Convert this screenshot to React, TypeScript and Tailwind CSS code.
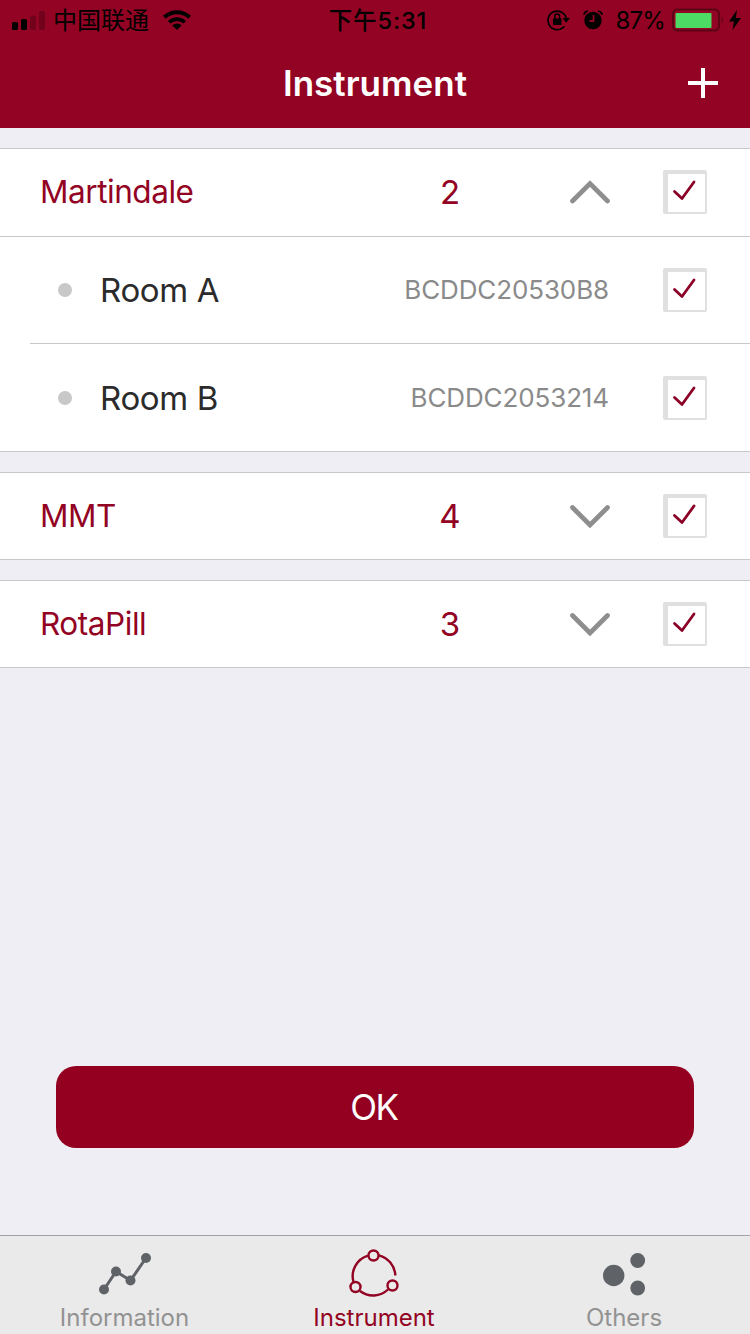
import { useState } from "react";

interface Room {
  name: string;
  serial: string;
}

interface InstrumentGroup {
  name: string;
  count: number;
  rooms: Room[];
}

const groups: InstrumentGroup[] = [
  {
    name: "Martindale",
    count: 2,
    rooms: [
      { name: "Room A", serial: "BCDDC20530B8" },
      { name: "Room B", serial: "BCDDC2053214" },
    ],
  },
  { name: "MMT", count: 4, rooms: [] },
  { name: "RotaPill", count: 3, rooms: [] },
];

function StatusBar() {
  return (
    <div className="grid h-10 grid-cols-3 items-center text-black">
      <div className="flex items-center pl-3">
        <svg className="mt-[2px]" width="34" height="20" viewBox="0 0 34 20">
          <rect x="0" y="11" width="6" height="8" rx="1.5" />
          <rect x="9" y="8" width="6" height="11" rx="1.5" />
          <rect x="18" y="4.5" width="6" height="14.5" rx="1.5" opacity=".22" />
          <rect x="27" y="0" width="6" height="19" rx="1.5" opacity=".22" />
        </svg>
        <span className="ml-[7px] pt-[2px] text-[24px] leading-[38px] whitespace-nowrap">中国联通</span>
        <svg className="ml-[14px]" width="28" height="20" viewBox="0 0 28 20">
          <g fill="none" stroke="currentColor" strokeWidth="4">
            <path d="M1.4 7.3a18 18 0 0 1 25.2 0" />
            <path d="M6.2 12.3a11.2 11.2 0 0 1 15.6 0" strokeWidth="3.6" />
          </g>
          <path d="M9.2 15.3a7 7 0 0 1 9.6 0L14 20z" />
        </svg>
      </div>
      <div className="pt-[2px] pl-[6px] text-center text-[23.5px] leading-[38px] font-medium tracking-[0.9px] whitespace-nowrap">
        下午5:31
      </div>
      <div className="flex items-center justify-end pr-[9px]">
        <svg width="24" height="22" viewBox="0 0 24 22">
          <path
            d="M17.5 17.3A9.3 9.3 0 1 1 19.3 9"
            fill="none"
            stroke="currentColor"
            strokeWidth="1.7"
          />
          <path d="M15.5 9H23l-3.8 4.8z" />
          <rect x="6" y="9.5" width="8.5" height="6.5" rx=".8" />
          <path d="M7.8 10V7.5a2.4 2.4 0 0 1 4.8 0V10" fill="none" stroke="currentColor" strokeWidth="1.5" />
        </svg>
        <svg className="ml-[12px]" width="20" height="20" viewBox="0 0 20 20">
          <circle cx="10" cy="10.5" r="8.7" />
          <path d="M.8 4.8Q1.5 1.5 5 1M15 1q3.5.5 4.2 3.8" fill="none" stroke="currentColor" strokeWidth="1.7" />
          <path d="M10.5 5v6h-4" fill="none" stroke="#930323" strokeWidth="1.8" />
        </svg>
        <span className="ml-[12px] pt-[2px] text-[24px] leading-[38px] tracking-[-0.8px]">87%</span>
        <svg className="ml-[7px]" width="53" height="24" viewBox="0 0 53 24">
          <rect x="1" y="1.5" width="46" height="21" rx="4.5" fill="none" stroke="#5c0416" strokeWidth="2" />
          <rect x="3.5" y="5" width="36" height="15" rx="1" fill="#4cd964" />
          <path d="M49.5 8.5q3 3.5 0 7z" fill="#5c0416" />
        </svg>
        <svg className="ml-[4px]" width="12" height="20" viewBox="0 0 12 20">
          <path d="M8 0 0 11.5h5L3.500 20 12 8H6.800z" />
        </svg>
      </div>
    </div>
  );
}

function Chevron({ open }: { open: boolean }) {
  return (
    <svg className="h-6 w-10" viewBox="0 0 40 24" fill="none" stroke="#8e8e8e" strokeWidth="4.7" strokeLinecap="round">
      {open ? <path d="M2.5 21 20 3.5 37.5 21" /> : <path d="M2.5 3.5 20 21 37.5 3.5" />}
    </svg>
  );
}

function Checkbox() {
  return (
    <div className="flex h-11 w-11 items-center justify-center rounded-[2px] border-t-4 border-r-2 border-b-2 border-l-[5px] border-[#e0e0e0]">
      <svg className="mr-[5px] mb-[6px]" width="24" height="22" viewBox="0 0 24 22" fill="none" stroke="#8b0026" strokeWidth="2.8" strokeLinecap="round" strokeLinejoin="round">
        <path d="M2.5 12.5 10 19.5 22 3" />
      </svg>
    </div>
  );
}

function RoomRow({ room, last }: { room: Room; last: boolean }) {
  return (
    <div className="pl-[30px]">
      <div
        className={
          last
            ? "flex h-[107px] items-center pl-7"
            : "flex h-[107px] items-center border-b border-[#c8c7cc] pl-7"
        }
      >
        <span className="h-3.5 w-3.5 rounded-full bg-[#c8c8c8]" />
        <span className="ml-[28px] text-[33px] leading-[50px] tracking-[-0.35px] text-[#2b2b2b]">{room.name}</span>
        <span className="ml-auto pb-px text-[26px] tracking-[-0.12px] text-[#8a8a8a]">{room.serial}</span>
        <div className="mr-[43px] ml-[54px]">
          <Checkbox />
        </div>
      </div>
    </div>
  );
}

function GroupCard({ group, open, onToggle }: { group: InstrumentGroup; open: boolean; onToggle: () => void }) {
  return (
    <section className="border-y border-[#c8c7cc] bg-white">
      <div className={open ? "flex h-[88px] items-center border-b border-[#c8c7cc] pb-px pl-10" : "flex h-[86px] items-center pl-10"}>
        <span className="w-[360px] pb-px text-[31.5px] tracking-[-0.45px] text-[#930323]">{group.name}</span>
        <span className="w-[100px] pt-[2px] text-center text-[33px] text-[#930323]">{group.count}</span>
        <button className="ml-[70px]" onClick={onToggle}>
          <Chevron open={open} />
        </button>
        <div className="ml-[53px]">
          <Checkbox />
        </div>
      </div>
      {open &&
        group.rooms.map((room, i) => (
          <RoomRow key={room.serial} room={room} last={i === group.rooms.length - 1} />
        ))}
    </section>
  );
}

function TabBar() {
  return (
    <nav className="flex h-[99px] border-t border-[#a3a2aa] bg-[#eaeaea] text-[24px] leading-8">
      <div className="flex w-[249px] flex-col items-center pt-3 text-[#929292]">
        <svg className="shrink-0" width="54" height="54" viewBox="0 0 54 54" fill="#5f6368" stroke="#5f6368">
          <path d="M6 41.5 18 23.5l14.5 9L48 10" fill="none" strokeWidth="3" />
          <g stroke="none">
            <circle cx="6" cy="41.5" r="5" />
            <circle cx="18" cy="23.5" r="5" />
            <circle cx="32.5" cy="32.5" r="5" />
            <circle cx="48" cy="10" r="5" />
          </g>
        </svg>
        <span>Information</span>
      </div>
      <div className="flex w-[250px] flex-col items-center pt-3 text-[#930323]">
        <svg className="shrink-0" width="54" height="54" viewBox="0 0 54 54" fill="none" stroke="#930323" strokeWidth="2.4">
          <path d="M48.300 27.500A21.500 21.500 0 0 0 31.500 7.300M21 7.600A21.500 21.500 0 0 0 6.500 34M13 43a21.500 21.500 0 0 0 28-1.500" />
          <circle cx="26.5" cy="7.5" r="5" />
          <circle cx="8.5" cy="39" r="5" />
          <circle cx="45.5" cy="37.5" r="5" />
        </svg>
        <span>Instrument</span>
      </div>
      <div className="flex w-[250px] flex-col items-center pt-3 text-[#929292]">
        <svg className="shrink-0" width="54" height="54" viewBox="0 0 54 54" fill="#5f6368">
          <circle cx="16.7" cy="27.5" r="10.7" />
          <circle cx="40.7" cy="12.5" r="7.4" />
          <circle cx="40.7" cy="40" r="7.4" />
        </svg>
        <span>Others</span>
      </div>
    </nav>
  );
}

export default function App() {
  const [openGroup, setOpenGroup] = useState("Martindale");

  return (
    <div className="flex h-[1334px] w-[750px] flex-col bg-[#efeef4] font-['Inter','Noto_Sans_CJK_SC',sans-serif]">
      <header className="h-32 bg-[#930323]">
        <StatusBar />
        <div className="grid h-[86px] grid-cols-3 items-center">
          <h1 className="col-start-2 text-center text-[35px] font-semibold text-white">Instrument</h1>
          <button className="mr-8 justify-self-end">
            <svg width="30" height="30" viewBox="0 0 30 30" stroke="#fff" strokeWidth="4">
              <path d="M15 0v30M0 15h30" />
            </svg>
          </button>
        </div>
      </header>

      <main className="flex flex-1 flex-col gap-5 pt-5">
        {groups.map(group => (
          <GroupCard
            key={group.name}
            group={group}
            open={openGroup === group.name}
            onToggle={() => setOpenGroup(openGroup === group.name ? "" : group.name)}
          />
        ))}
        <button className="mx-14 mt-auto mb-[87px] h-[82px] rounded-[20px] bg-[#930020] pr-0.5 text-[35px] tracking-[-1.5px] text-white">
          OK
        </button>
      </main>

      <TabBar />
    </div>
  );
}
